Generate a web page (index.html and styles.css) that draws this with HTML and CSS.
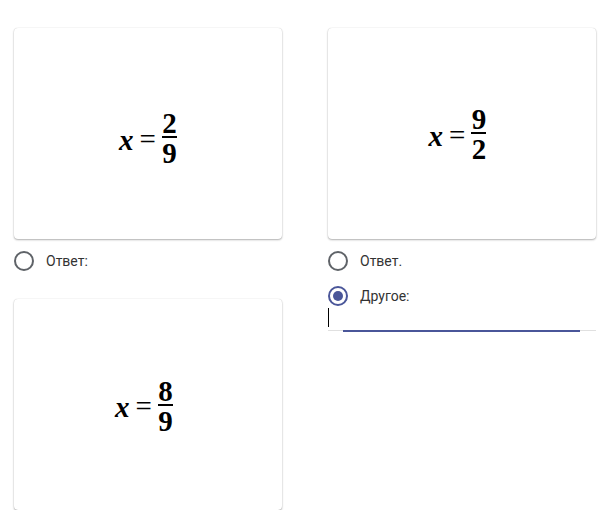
FILE: index.html
```html
<!DOCTYPE html>
<html lang="ru">
<head>
<meta charset="utf-8">
<title>Вопрос</title>
<link rel="stylesheet" href="styles.css">
</head>
<body>
<div class="grid">
  <div class="col">
    <div class="card card-a">
      <div class="expr"><span class="var">x</span><span class="eq">=</span><span class="frac"><span class="num">2</span><span class="bar"></span><span class="den">9</span></span></div>
    </div>
    <label class="option option-first"><span class="radio"></span><span class="label">Ответ:</span></label>
    <div class="card card-c">
      <div class="expr"><span class="var">x</span><span class="eq">=</span><span class="frac"><span class="num">8</span><span class="bar"></span><span class="den">9</span></span></div>
    </div>
  </div>
  <div class="col">
    <div class="card card-b">
      <div class="expr"><span class="var">x</span><span class="eq">=</span><span class="frac"><span class="num">9</span><span class="bar"></span><span class="den">2</span></span></div>
    </div>
    <label class="option option-first"><span class="radio"></span><span class="label">Ответ.</span></label>
    <label class="option option-second"><span class="radio radio-checked"></span><span class="label">Другое:</span></label>
    <div class="other-input">
      <span class="caret"></span>
      <span class="underline"><span class="underline-active"></span></span>
    </div>
  </div>
</div>
</body>
</html>
```

FILE: styles.css
```css
html, body {
  margin: 0;
  padding: 0;
  background: #ffffff;
}

body {
  font-family: Roboto, "Liberation Sans", Arial, sans-serif;
  color: #333333;
}

.grid {
  display: flex;
  gap: 46px;
  padding: 28px 0 0 14px;
}

.col {
  width: 268px;
  display: flex;
  flex-direction: column;
}

.card {
  height: 211px;
  box-sizing: border-box;
  border-radius: 4px;
  background: #fff;
  box-shadow: 0 1px 2px rgba(0, 0, 0, 0.3), 0 0 1px rgba(0, 0, 0, 0.2);
  display: flex;
  align-items: center;
  justify-content: center;
}

.card-a { padding-top: 9px; padding-left: 0; }
.card-b { padding-top: 1px; padding-right: 9px; }
.card-c { padding-top: 2px; padding-right: 8px; margin-top: 28px; }

.expr {
  display: flex;
  align-items: center;
  font-family: "Liberation Serif", "Times New Roman", serif;
  font-size: 29px;
  line-height: 29px;
  color: #000;
}

.var {
  font-weight: bold;
  font-style: italic;
  margin-top: 4px;
}

.eq {
  margin: 2px 6px 0 6px;
}

.frac {
  display: flex;
  flex-direction: column;
  align-items: center;
  font-weight: bold;
}

.num, .den {
  line-height: 20px;
}

.bar {
  width: 15px;
  height: 2px;
  background: #000;
  margin: 3px 0 5px;
}

.option {
  display: flex;
  align-items: center;
  gap: 12px;
  font-size: 14px;
  height: 20px;
}

.option-first { margin-top: 12px; }
.option-second { margin-top: 15px; }

.radio {
  width: 20px;
  height: 20px;
  box-sizing: border-box;
  border: 2px solid #5f6368;
  border-radius: 50%;
  display: flex;
  align-items: center;
  justify-content: center;
}

.radio-checked {
  border-color: #4a5699;
}

.radio-checked::after {
  content: "";
  width: 10px;
  height: 10px;
  border-radius: 50%;
  background: #4a5699;
}

.label {
  color: #333333;
}

.other-input {
  display: flex;
  flex-direction: column;
  margin-top: 2px;
}

.caret {
  width: 1px;
  height: 19px;
  background: #000;
}

.underline {
  margin-top: 3px;
  height: 1px;
  background: #e0e0e0;
  display: flex;
  padding: 0 16px 0 15px;
}

.underline-active {
  flex: 1;
  height: 2px;
  background: #4a5699;
}
```
